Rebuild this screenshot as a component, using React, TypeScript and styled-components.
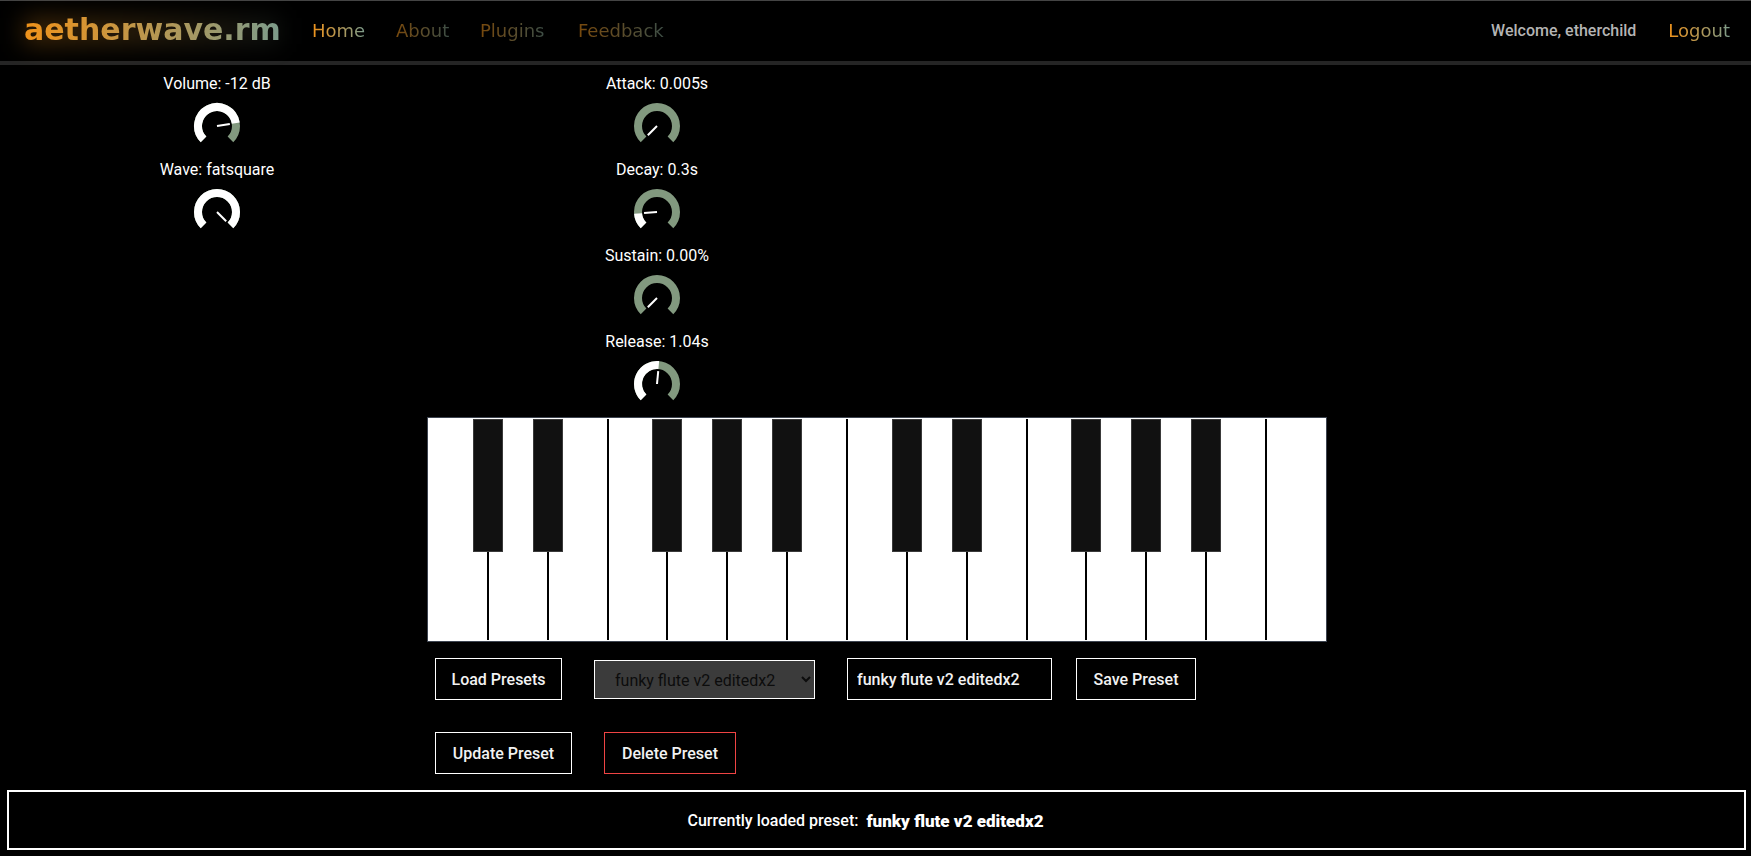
import React, { useState } from "react";
import styled, { createGlobalStyle } from "styled-components";

const colors = {
  amber: "#f0931b",
  sage: "#82997f",
  aqua: "#7c9c8c",
  line: "#252525",
};

const displayFont = `"DejaVu Sans", sans-serif`;

const GlobalStyle = createGlobalStyle`
  *, *::before, *::after { box-sizing: border-box; }
  body {
    margin: 0;
    background: #000;
    color: #fff;
    font-family: Roboto, sans-serif;
    font-size: 16px;
    line-height: 24px;
  }
  button, input, select { font: inherit; }
`;

const Header = styled.header`
  display: flex;
  align-items: center;
  height: 65px;
  padding: 0 21px 0 24px;
  border-top: 1px solid #444;
  border-bottom: 4px solid ${colors.line};
`;

const gradientText = `
  background: linear-gradient(90deg, ${colors.amber}, ${colors.aqua});
  background-clip: text;
  -webkit-background-clip: text;
  color: transparent;
  text-decoration: none;
  font-family: ${displayFont};
`;

const Logo = styled.a`
  ${gradientText}
  position: relative;
  width: 256px;
  margin-right: 32px;
  padding-bottom: 2px;
  font-size: 30px;
  font-weight: 700;
  line-height: 40px;
  white-space: nowrap;

  &::before {
    content: "";
    position: absolute;
    inset: 8px 0;
    background: linear-gradient(90deg, rgba(240, 147, 27, 0.28), rgba(124, 156, 140, 0.12));
    filter: blur(12px);
    pointer-events: none;
  }
`;

const Nav = styled.nav`
  display: grid;
  grid-template-columns: 52px 52px 66px 87px;
  column-gap: 32px;
`;

const NavLink = styled.a<{ $dim?: boolean }>`
  ${gradientText}
  justify-self: start;
  font-size: 18px;
  white-space: nowrap;
  opacity: ${(p) => (p.$dim ? 0.5 : 1)};
`;

const Account = styled.div`
  display: flex;
  gap: 32px;
  margin-left: auto;
`;

const Welcome = styled.span`
  color: #b4b4b4;
  font-weight: 500;
`;

const Main = styled.main`
  padding: 0 2px 0 5px;
`;

const Controls = styled.section`
  display: grid;
  grid-template-columns: repeat(4, 1fr);
  column-gap: 16px;
`;

const KnobColumn = styled.div`
  display: flex;
  flex-direction: column;
`;

const KnobBox = styled.label`
  display: flex;
  flex-direction: column;
  align-items: center;
  gap: 5px;
  padding-top: 7px;
`;

const Dial = styled.span`
  position: relative;
  width: 50px;
  height: 50px;

  svg { display: block; }

  input {
    position: absolute;
    inset: 0;
    width: 100%;
    height: 100%;
    margin: 0;
    opacity: 0;
    cursor: pointer;
  }
`;

const point = (radius: number, degrees: number) => {
  const a = (degrees * Math.PI) / 180;
  return `${25 + radius * Math.sin(a)} ${25 - radius * Math.cos(a)}`;
};

const arc = (from: number, to: number) =>
  `M${point(19, from)} A19 19 0 ${to - from > 180 ? 1 : 0} 1 ${point(19, to)}`;

function Knob({ label, amount }: { label: string; amount: number }) {
  const [value, setValue] = useState(amount);
  const angle = -135 + value * 270;
  return (
    <KnobBox>
      {label}
      <Dial>
        <svg width="50" height="50" viewBox="0 0 50 50" fill="none" aria-hidden="true">
          <path d={arc(-135, 135)} stroke={colors.sage} strokeWidth="8" />
          {value > 0 && <path d={arc(-135, angle)} stroke="#fff" strokeWidth="8" />}
          <path d={`M25 25 L${point(13, angle)}`} stroke="#fff" strokeWidth="2" />
        </svg>
        <input
          type="range"
          min={0}
          max={1}
          step={0.01}
          value={value}
          onChange={(e) => setValue(Number(e.target.value))}
        />
      </Dial>
    </KnobBox>
  );
}

const Keyboard = styled.section`
  display: flex;
  max-width: 900px;
  height: 225px;
  margin: 8px auto 0;
  padding: 1px 0;
  background: #fff;
  border: 1px solid #3d4450;
`;

const KeySlot = styled.div`
  position: relative;
  flex: 1;
`;

const WhiteKey = styled.button`
  display: block;
  width: 100%;
  height: 100%;
  padding: 0;
  background: #fff;
  border: 0 solid #000;
  border-width: 0 1px;

  ${KeySlot}:first-child & { border-left-width: 0; }
  ${KeySlot}:last-child & { border-right-width: 0; }
`;

const BlackKey = styled.button`
  position: absolute;
  z-index: 1;
  top: 0;
  right: -15px;
  width: 30px;
  height: 133px;
  padding: 0;
  background: #111;
  border: 1px solid #3a3a3a;
`;

const whiteNotes = ["C", "D", "E", "F", "G", "A", "B", "C", "D", "E", "F", "G", "A", "B", "C"];
const hasSharp = (note: string, index: number) =>
  index < whiteNotes.length - 1 && note !== "E" && note !== "B";

const Presets = styled.section`
  display: flex;
  flex-wrap: wrap;
  align-items: center;
  gap: 32px;
  max-width: 900px;
  margin: 0 auto;
  padding: 16px 8px;
`;

const SaveGroup = styled.div`
  display: flex;
  gap: 24px;
`;

const Button = styled.button<{ $width: number; $danger?: boolean }>`
  width: ${(p) => p.$width}px;
  height: 42px;
  padding: 2px 0 0;
  background: #000;
  color: #f2f2f2;
  font-weight: 500;
  white-space: nowrap;
  border: 1px solid ${(p) => (p.$danger ? "#ef4444" : "#fff")};
`;

const PresetSelect = styled.select`
  width: 221px;
  height: 39px;
  padding: 2px 16px 0;
  background: #3b3b3b;
  color: #0c0c0c;
  border: 1px solid #fff;
  border-radius: 0;
`;

const PresetName = styled.input`
  width: 205px;
  height: 42px;
  padding: 0 9px;
  background: #000;
  color: #f2f2f2;
  font-weight: 500;
  border: 1px solid #fff;
`;

const Status = styled.footer`
  display: flex;
  justify-content: center;
  align-items: center;
  gap: 8px;
  height: 60px;
  margin: 0 5px 6px 7px;
  padding: 2px 22px 0 0;
  border: 2px solid #fff;
  font-weight: 500;

  strong {
    font-size: 17px;
    font-weight: 900;
  }
`;

const presetName = "funky flute v2 editedx2";

export default function App() {
  const [name, setName] = useState(presetName);
  return (
    <>
      <GlobalStyle />
      <Header>
        <Logo href="#">aetherwave.rm</Logo>
        <Nav>
          <NavLink href="#home">Home</NavLink>
          <NavLink href="#about" $dim>About</NavLink>
          <NavLink href="#plugins" $dim>Plugins</NavLink>
          <NavLink href="#feedback" $dim>Feedback</NavLink>
        </Nav>
        <Account>
          <Welcome>Welcome, etherchild</Welcome>
          <NavLink href="#logout">Logout</NavLink>
        </Account>
      </Header>
      <Main>
        <Controls>
          <KnobColumn>
            <Knob label="Volume: -12 dB" amount={0.8} />
            <Knob label="Wave: fatsquare" amount={1} />
          </KnobColumn>
          <KnobColumn>
            <Knob label="Attack: 0.005s" amount={0} />
            <Knob label="Decay: 0.3s" amount={0.15} />
            <Knob label="Sustain: 0.00%" amount={0} />
            <Knob label="Release: 1.04s" amount={0.52} />
          </KnobColumn>
        </Controls>
        <Keyboard aria-label="Keyboard">
          {whiteNotes.map((note, i) => (
            <KeySlot key={i}>
              <WhiteKey aria-label={note} />
              {hasSharp(note, i) && <BlackKey aria-label={`${note} sharp`} />}
            </KeySlot>
          ))}
        </Keyboard>
        <Presets>
          <Button $width={127}>Load Presets</Button>
          <PresetSelect aria-label="Preset">
            <option>{presetName}</option>
          </PresetSelect>
          <SaveGroup>
            <PresetName
              aria-label="Preset name"
              value={name}
              onChange={(e) => setName(e.target.value)}
            />
            <Button $width={120}>Save Preset</Button>
          </SaveGroup>
          <Button $width={137}>Update Preset</Button>
          <Button $width={132} $danger>Delete Preset</Button>
        </Presets>
      </Main>
      <Status>
        <span>Currently loaded preset:</span>
        <strong>{presetName}</strong>
      </Status>
    </>
  );
}
